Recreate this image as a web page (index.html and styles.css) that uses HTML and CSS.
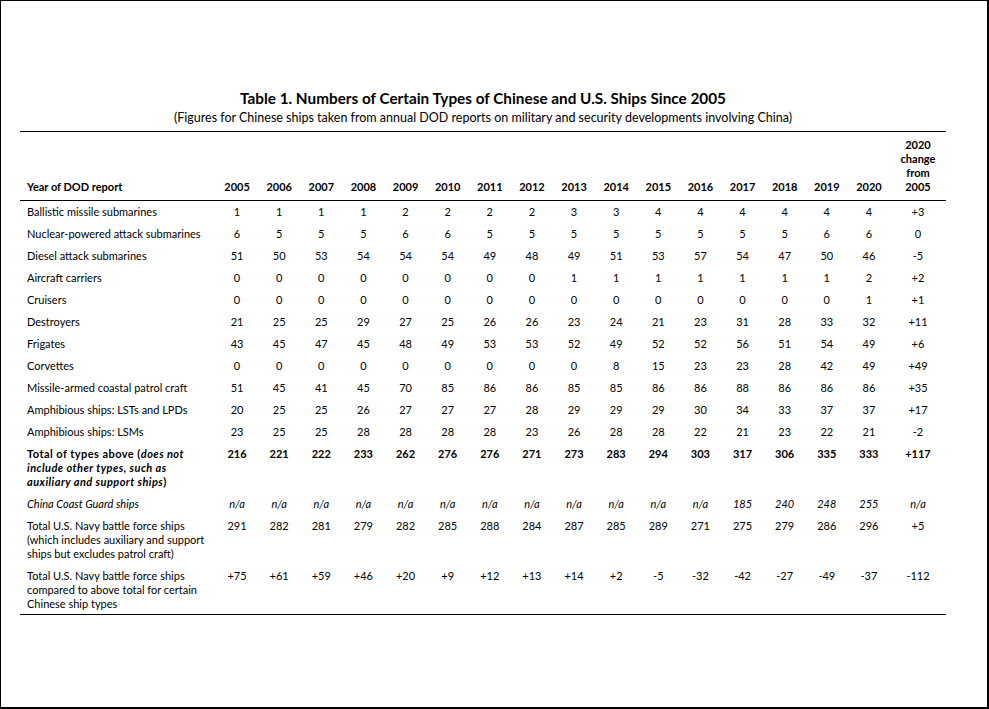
FILE: index.html
```html
<!DOCTYPE html>
<html lang="en">
<head>
<meta charset="utf-8">
<title>Table 1</title>
<link rel="stylesheet" href="styles.css">
</head>
<body>
<div class="page">
  <div class="doc">
    <div class="heading">
      <div class="title">Table 1. Numbers of Certain Types of Chinese and U.S. Ships Since 2005</div>
      <div class="subtitle">(Figures for Chinese ships taken from annual DOD reports on military and security developments involving China)</div>
    </div>
    <table class="ships">
      <colgroup>
        <col class="c-label">
        <col class="c-year"><col class="c-year"><col class="c-year"><col class="c-year">
        <col class="c-year"><col class="c-year"><col class="c-year"><col class="c-year">
        <col class="c-year"><col class="c-year"><col class="c-year"><col class="c-year">
        <col class="c-year"><col class="c-year"><col class="c-year"><col class="c-year">
        <col class="c-change">
      </colgroup>
      <thead>
        <tr>
          <th class="lbl">Year of DOD report</th>
          <th>2005</th><th>2006</th><th>2007</th><th>2008</th><th>2009</th><th>2010</th><th>2011</th><th>2012</th>
          <th>2013</th><th>2014</th><th>2015</th><th>2016</th><th>2017</th><th>2018</th><th>2019</th><th>2020</th>
          <th>2020<br>change<br>from<br>2005</th>
        </tr>
      </thead>
      <tbody>
        <tr><td class="lbl">Ballistic missile submarines</td><td>1</td><td>1</td><td>1</td><td>1</td><td>2</td><td>2</td><td>2</td><td>2</td><td>3</td><td>3</td><td>4</td><td>4</td><td>4</td><td>4</td><td>4</td><td>4</td><td>+3</td></tr>
        <tr><td class="lbl">Nuclear-powered attack submarines</td><td>6</td><td>5</td><td>5</td><td>5</td><td>6</td><td>6</td><td>5</td><td>5</td><td>5</td><td>5</td><td>5</td><td>5</td><td>5</td><td>5</td><td>6</td><td>6</td><td>0</td></tr>
        <tr><td class="lbl">Diesel attack submarines</td><td>51</td><td>50</td><td>53</td><td>54</td><td>54</td><td>54</td><td>49</td><td>48</td><td>49</td><td>51</td><td>53</td><td>57</td><td>54</td><td>47</td><td>50</td><td>46</td><td>-5</td></tr>
        <tr><td class="lbl">Aircraft carriers</td><td>0</td><td>0</td><td>0</td><td>0</td><td>0</td><td>0</td><td>0</td><td>0</td><td>1</td><td>1</td><td>1</td><td>1</td><td>1</td><td>1</td><td>1</td><td>2</td><td>+2</td></tr>
        <tr><td class="lbl">Cruisers</td><td>0</td><td>0</td><td>0</td><td>0</td><td>0</td><td>0</td><td>0</td><td>0</td><td>0</td><td>0</td><td>0</td><td>0</td><td>0</td><td>0</td><td>0</td><td>1</td><td>+1</td></tr>
        <tr><td class="lbl">Destroyers</td><td>21</td><td>25</td><td>25</td><td>29</td><td>27</td><td>25</td><td>26</td><td>26</td><td>23</td><td>24</td><td>21</td><td>23</td><td>31</td><td>28</td><td>33</td><td>32</td><td>+11</td></tr>
        <tr><td class="lbl">Frigates</td><td>43</td><td>45</td><td>47</td><td>45</td><td>48</td><td>49</td><td>53</td><td>53</td><td>52</td><td>49</td><td>52</td><td>52</td><td>56</td><td>51</td><td>54</td><td>49</td><td>+6</td></tr>
        <tr><td class="lbl">Corvettes</td><td>0</td><td>0</td><td>0</td><td>0</td><td>0</td><td>0</td><td>0</td><td>0</td><td>0</td><td>8</td><td>15</td><td>23</td><td>23</td><td>28</td><td>42</td><td>49</td><td>+49</td></tr>
        <tr><td class="lbl">Missile-armed coastal patrol craft</td><td>51</td><td>45</td><td>41</td><td>45</td><td>70</td><td>85</td><td>86</td><td>86</td><td>85</td><td>85</td><td>86</td><td>86</td><td>88</td><td>86</td><td>86</td><td>86</td><td>+35</td></tr>
        <tr><td class="lbl">Amphibious ships: LSTs and LPDs</td><td>20</td><td>25</td><td>25</td><td>26</td><td>27</td><td>27</td><td>27</td><td>28</td><td>29</td><td>29</td><td>29</td><td>30</td><td>34</td><td>33</td><td>37</td><td>37</td><td>+17</td></tr>
        <tr><td class="lbl">Amphibious ships: LSMs</td><td>23</td><td>25</td><td>25</td><td>28</td><td>28</td><td>28</td><td>28</td><td>23</td><td>26</td><td>28</td><td>28</td><td>22</td><td>21</td><td>23</td><td>22</td><td>21</td><td>-2</td></tr>
        <tr class="total"><td class="lbl">Total of types above (<em>does not include other types, such as auxiliary and support ships</em>)</td><td>216</td><td>221</td><td>222</td><td>233</td><td>262</td><td>276</td><td>276</td><td>271</td><td>273</td><td>283</td><td>294</td><td>303</td><td>317</td><td>306</td><td>335</td><td>333</td><td>+117</td></tr>
        <tr class="coast"><td class="lbl">China Coast Guard ships</td><td>n/a</td><td>n/a</td><td>n/a</td><td>n/a</td><td>n/a</td><td>n/a</td><td>n/a</td><td>n/a</td><td>n/a</td><td>n/a</td><td>n/a</td><td>n/a</td><td>185</td><td>240</td><td>248</td><td>255</td><td>n/a</td></tr>
        <tr><td class="lbl">Total U.S. Navy battle force ships (which includes auxiliary and support ships but excludes patrol craft)</td><td>291</td><td>282</td><td>281</td><td>279</td><td>282</td><td>285</td><td>288</td><td>284</td><td>287</td><td>285</td><td>289</td><td>271</td><td>275</td><td>279</td><td>286</td><td>296</td><td>+5</td></tr>
        <tr class="last"><td class="lbl">Total U.S. Navy battle force ships compared to above total for certain Chinese ship types</td><td>+75</td><td>+61</td><td>+59</td><td>+46</td><td>+20</td><td>+9</td><td>+12</td><td>+13</td><td>+14</td><td>+2</td><td>-5</td><td>-32</td><td>-42</td><td>-27</td><td>-49</td><td>-37</td><td>-112</td></tr>
      </tbody>
    </table>
  </div>
</div>
</body>
</html>
```

FILE: styles.css
```css
html, body {
  margin: 0;
  padding: 0;
  background: #fff;
}

.page {
  width: 989px;
  height: 709px;
  box-sizing: border-box;
  border-top: 1px solid #000;
  border-left: 1px solid #000;
  border-right: 2px solid #000;
  border-bottom: 2px solid #000;
  padding: 87px 0 0 19px;
  font-family: "Lato", "Open Sans", sans-serif;
  color: #000;
}

.doc {
  width: 926px;
}

.heading {
  text-align: center;
  padding-bottom: 5px;
}

.title {
  font-weight: 700;
  font-size: 15.3px;
  line-height: 20px;
}

.subtitle {
  font-size: 12.5px;
  line-height: 16px;
  margin-top: 2px;
}

.ships {
  width: 926px;
  border-collapse: collapse;
  table-layout: fixed;
  border-top: 1px solid #000;
  border-bottom: 1px solid #000;
  font-size: 11px;
  line-height: 14px;
}

.c-label { width: 196px; }
.c-year { width: 42.125px; }
.c-change { width: 56px; }

.ships th {
  font-weight: 700;
  text-align: center;
  vertical-align: bottom;
  padding: 6px 0 6px;
  border-bottom: 1px solid #000;
}

.ships td {
  text-align: center;
  vertical-align: top;
  padding: 4px 0;
}

.ships .lbl {
  text-align: left;
  padding-left: 7px;
  padding-right: 8px;
}

.total td {
  font-weight: 700;
}

.total .lbl {
  letter-spacing: 0.45px;
}

.total em {
  font-style: italic;
}

.coast td {
  font-style: italic;
}

.last td {
  padding-bottom: 3px;
}
```
